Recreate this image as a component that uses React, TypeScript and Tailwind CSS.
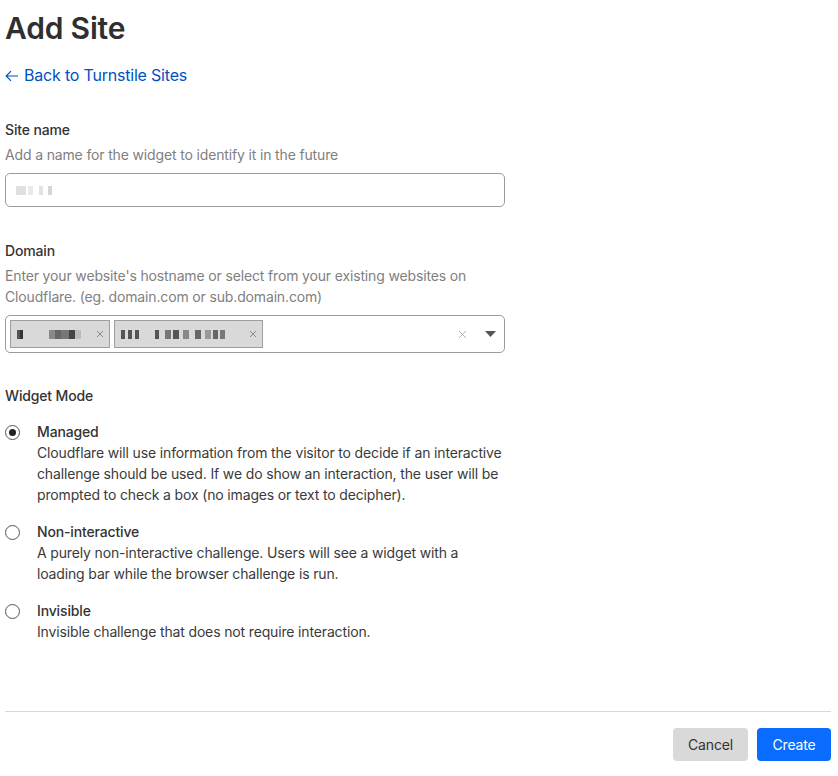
import React, { useState } from 'react';

/**
 * Add Site
 *
 * Turnstile widget creation form.
 */

type Mode = 'managed' | 'non-interactive' | 'invisible';

const MODES: { value: Mode; label: string; description: string }[] = [
  {
    value: 'managed',
    label: 'Managed',
    description:
      'Cloudflare will use information from the visitor to decide if an interactive challenge should be used. If we do show an interaction, the user will be prompted to check a box (no images or text to decipher).',
  },
  {
    value: 'non-interactive',
    label: 'Non-interactive',
    description:
      'A purely non-interactive challenge. Users will see a widget with a loading bar while the browser challenge is run.',
  },
  {
    value: 'invisible',
    label: 'Invisible',
    description: 'Invisible challenge that does not require interaction.',
  },
];

// Redacted values show up as pixel blocks in the screenshot
function Redacted({ blocks }: { blocks: [number, number, string][] }) {
  return (
    <span className="flex items-center">
      {blocks.map(([w, gap, color], i) => (
        <span key={i} className="h-[9px] inline-block" style={{ width: w, marginLeft: gap, background: color }} />
      ))}
    </span>
  );
}

function Tag({ width, blocks }: { width: number; blocks: [number, number, string][] }) {
  return (
    <div
      className="h-[28px] flex items-center justify-between bg-[#d9d9d9] border border-[#9e9e9e] pl-[6px] pr-[5px]"
      style={{ width }}
    >
      <Redacted blocks={blocks} />
      <svg width="8" height="8" viewBox="0 0 8 8" className="text-[#8a8a8a]">
        <path d="M1 1L7 7M7 1L1 7" stroke="currentColor" strokeWidth="1" />
      </svg>
    </div>
  );
}

export default function App() {
  const [mode, setMode] = useState<Mode>('managed');

  return (
    <div className="min-h-[776px] bg-white pl-[5px] pr-[7px] pt-[10px] text-[#333] tracking-[-0.15px] font-['Inter','Liberation_Sans',sans-serif]">
      {/* Page Header */}
      <h1 className="text-[30px] leading-[36px] font-semibold text-[#2f2f2f] tracking-[-0.2px]">Add Site</h1>
      <a href="#" className="mt-[17px] flex items-center gap-[5px] text-[16px] leading-[24px] text-[#0051c3] w-fit tracking-[-0.2px]">
        <svg width="14" height="12" viewBox="0 0 14 12" className="mt-[1px]">
          <path d="M13 6H1.5M6 1.2L1.2 6L6 10.8" fill="none" stroke="currentColor" strokeWidth="1.2" />
        </svg>
        Back to Turnstile Sites
      </a>

      {/* Site name */}
      <div className="mt-[33px] w-[500px]">
        <div className="text-[14px] leading-[20px] font-medium text-[#333]">Site name</div>
        <div className="mt-[5px] text-[14px] leading-[20px] text-[#808080]">
          Add a name for the widget to identify it in the future
        </div>
        <div className="mt-[8px] h-[34px] border border-[#9a9a9a] rounded-[5px] flex items-center pl-[10px]">
          <Redacted
            blocks={[
              [10, 0, '#e0e0e0'],
              [5, 2, '#eaeaea'],
              [4, 6, '#e2e2e2'],
              [4, 5, '#d6d6d6'],
            ]}
          />
        </div>
      </div>

      {/* Domain */}
      <div className="mt-[34px] w-[500px]">
        <div className="text-[14px] leading-[20px] font-medium text-[#333]">Domain</div>
        <div className="mt-[4px] text-[14px] leading-[21px] text-[#808080]">
          Enter your website's hostname or select from your existing websites on Cloudflare. (eg. domain.com or
          sub.domain.com)
        </div>
        <div className="mt-[8px] h-[38px] border border-[#9a9a9a] rounded-[5px] flex items-center pl-[4px] pr-[8px]">
          <div className="flex gap-[4px]">
            <Tag
              width={100}
              blocks={[
                [3, 0, '#555'],
                [3, 0, '#333'],
                [6, 26, '#888'],
                [6, 0, '#666'],
                [8, 0, '#777'],
                [6, 0, '#444'],
                [6, 0, '#bbb'],
              ]}
            />
            <Tag
              width={149}
              blocks={[
                [4, 0, '#555'],
                [4, 3, '#555'],
                [4, 3, '#555'],
                [4, 16, '#555'],
                [6, 6, '#777'],
                [6, 2, '#555'],
                [6, 4, '#888'],
                [6, 6, '#666'],
                [6, 4, '#999'],
                [5, 2, '#666'],
                [5, 2, '#777'],
              ]}
            />
          </div>
          <div className="ml-auto flex items-center gap-[18px]">
            <svg width="9" height="9" viewBox="0 0 9 9" className="text-[#b0b0b0]">
              <path d="M1 1L8 8M8 1L1 8" stroke="currentColor" strokeWidth="1" />
            </svg>
            <svg width="11" height="6" viewBox="0 0 11 6" className="text-[#555]">
              <path d="M0 0H11L5.5 6Z" fill="currentColor" />
            </svg>
          </div>
        </div>
      </div>

      {/* Widget Mode */}
      <div className="mt-[33px]">
        <div className="text-[14px] leading-[20px] font-medium text-[#333]">Widget Mode</div>
        <div className="mt-[16px] flex flex-col gap-[17px]">
          {MODES.map((m) => (
            <label key={m.value} className="flex cursor-pointer" onClick={() => setMode(m.value)}>
              <span className="w-[32px] shrink-0 pt-[3px]">
                <span className="w-[15px] h-[15px] rounded-full border border-[#555] flex items-center justify-center">
                  {mode === m.value && <span className="w-[7px] h-[7px] rounded-full bg-[#222]" />}
                </span>
              </span>
              <span className="w-[468px]">
                <span className="block text-[14px] leading-[20px] font-medium text-[#333]">{m.label}</span>
                <span className="block text-[14px] leading-[21px] text-[#3a3a3a]">{m.description}</span>
              </span>
            </label>
          ))}
        </div>
      </div>

      {/* Footer */}
      <div className="mt-[69px] border-t border-[#d9d9d9] pt-[16px] flex justify-end gap-[9px]">
        <button className="h-[33px] w-[75px] rounded-[4px] bg-[#d9d9d9] text-[14px] text-[#333]">Cancel</button>
        <button className="h-[33px] w-[74px] rounded-[4px] bg-[#0a6cff] text-[14px] text-white">Create</button>
      </div>
    </div>
  );
}
